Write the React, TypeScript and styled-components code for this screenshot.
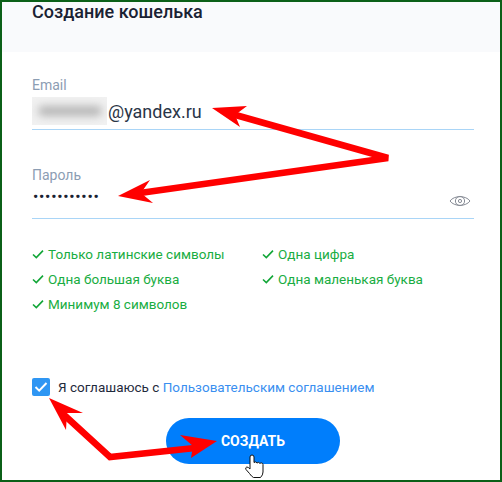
import React from 'react';
import styled, { createGlobalStyle } from 'styled-components';

const GlobalStyle = createGlobalStyle`
  html, body {
    margin: 0;
    padding: 0;
    background: #fff;
  }
  body {
    font-family: Roboto, "Liberation Sans", sans-serif;
  }
`;

const Frame = styled.div`
  position: relative;
  box-sizing: border-box;
  width: 502px;
  height: 482px;
  border: 2px solid #0b6018;
  background: #fff;
  overflow: hidden;
`;

const Header = styled.div`
  height: 50px;
  padding-left: 30px;
  background: #f9fafc;
`;

const Title = styled.div`
  font-size: 18px;
  font-weight: 500;
  line-height: 20px;
  color: #1a2233;
`;

const Form = styled.div`
  display: flex;
  flex-direction: column;
  padding: 25px 26px 0 30px;
`;

const Field = styled.div<{ $gap: number }>`
  margin-bottom: ${props => props.$gap}px;
  border-bottom: 1px solid #a9d5f7;
`;

const Label = styled.div`
  font-size: 14px;
  line-height: 16px;
  color: #8c9db3;
`;

const ValueRow = styled.div<{ $height: number }>`
  display: flex;
  align-items: center;
  justify-content: space-between;
  height: ${props => props.$height}px;
`;

const EmailValue = styled.div`
  display: flex;
  align-items: center;
  font-size: 18px;
  color: #2a3547;
`;

const BlurPatch = styled.div`
  position: relative;
  width: 75px;
  height: 28px;
  margin-right: 1px;
  background: #f1f1f1;
  overflow: hidden;

  &::before {
    content: '';
    position: absolute;
    left: 6px;
    right: 5px;
    top: 9px;
    height: 10px;
    border-radius: 5px;
    background: #b4b4b4;
    filter: blur(4px);
  }
`;

const Dots = styled.div`
  margin: 0 0 8px 1px;
  font-size: 15px;
  font-weight: 500;
  letter-spacing: 0.8px;
  color: #1a2233;
`;

const EyeSlot = styled.div`
  display: flex;
  margin-right: 3px;
`;

const Rules = styled.div`
  display: grid;
  grid-template-columns: 230px 1fr;
  grid-auto-rows: 25px;
  margin-top: -14px;
`;

const Rule = styled.div`
  display: flex;
  align-items: center;
  gap: 4px;
  font-size: 13.5px;
  color: #19ad42;
`;

const Agreement = styled.div`
  display: flex;
  align-items: center;
  gap: 8px;
  margin-top: 62px;
  font-size: 13.5px;
  color: #1f2a3c;
`;

const CheckBox = styled.div`
  display: flex;
  align-items: center;
  justify-content: center;
  width: 18px;
  height: 18px;
  border-radius: 2px;
  background: #2f96f3;
`;

const AgreementLink = styled.a`
  color: #3a8ff0;
`;

const CreateButton = styled.button`
  align-self: center;
  width: 174px;
  height: 46px;
  margin-top: 22px;
  border: none;
  border-radius: 23px;
  background: #007efc;
  color: #fff;
  font-family: inherit;
  font-size: 14px;
  font-weight: 700;
`;

const Overlay = styled.svg`
  position: absolute;
  left: -2px;
  top: -2px;
  width: 502px;
  height: 482px;
  pointer-events: none;
`;

const RuleCheck = () => (
  <svg width="12" height="12" viewBox="0 0 12 12" fill="none">
    <path d="M1 6.5 L4.3 9.6 L11 2.6" stroke="#12a638" strokeWidth="1.6" />
  </svg>
);

const EyeIcon = () => (
  <svg width="22" height="14" viewBox="0 0 22 14" fill="none" stroke="#878c96" strokeWidth="1">
    <path d="M1 7 C5 1.2 17 1.2 21 7 C17 12.8 5 12.8 1 7 Z" />
    <circle cx="11" cy="7" r="4.6" />
    <circle cx="11" cy="7" r="1.6" />
  </svg>
);

const leftRules = ['Только латинские символы', 'Одна большая буква', 'Минимум 8 символов'];
const rightRules = ['Одна цифра', 'Одна маленькая буква'];

const App: React.FC = () => {
  const rules = [leftRules[0], rightRules[0], leftRules[1], rightRules[1], leftRules[2]];

  return (
    <Frame>
      <GlobalStyle />
      <Header>
        <Title>Создание кошелька</Title>
      </Header>
      <Form>
        <Field $gap={37}>
          <Label>Email</Label>
          <ValueRow $height={36}>
            <EmailValue>
              <BlurPatch />
              @yandex.ru
            </EmailValue>
          </ValueRow>
        </Field>
        <Field $gap={36}>
          <Label>Пароль</Label>
          <ValueRow $height={35}>
            <Dots>•••••••••••</Dots>
            <EyeSlot>
              <EyeIcon />
            </EyeSlot>
          </ValueRow>
        </Field>
        <Rules>
          {rules.map(rule => (
            <Rule key={rule}>
              <RuleCheck />
              {rule}
            </Rule>
          ))}
        </Rules>
        <Agreement>
          <CheckBox>
            <svg width="14" height="12" viewBox="0 0 14 12" fill="none">
              <path d="M1.5 6 L5.2 9.6 L12.5 2" stroke="#fff" strokeWidth="2" />
            </svg>
          </CheckBox>
          <span>
            Я соглашаюсь с <AgreementLink>Пользовательским соглашением</AgreementLink>
          </span>
        </Agreement>
        <CreateButton>СОЗДАТЬ</CreateButton>
      </Form>
      <Overlay viewBox="0 0 502 482">
        <g fill="#ff0000">
          <polyline
            points="232,114 388,158 140,193"
            fill="none"
            stroke="#ff0000"
            strokeWidth="6.5"
            strokeLinejoin="bevel"
          />
          <polygon points="212,108 247,106 235,115 240,127" />
          <polygon points="118,196 150,180 141,193 153,203" />
          <polyline
            points="62,413 110,457 195,448"
            fill="none"
            stroke="#ff0000"
            strokeWidth="6.5"
            strokeLinejoin="miter"
          />
          <polygon points="49,398 83,413 67,413 66,430" />
          <polygon points="217,441 180,435 193,446 191,458" />
        </g>
        <path
          d="M250 457 a2 2 0 0 1 4 0 v5.5 a2 2 0 0 1 3 .5 a2 2 0 0 1 3 .5 a1.7 1.7 0 0 1 3 1 V472 q0 3 -2.5 5.5 h-7 q-2 -1 -4 -4 l-3.5 -4 q-1 -2 .8 -2.5 q1.5 0 3.2 2 z"
          fill="#fff"
          stroke="#111"
          strokeWidth="1"
        />
      </Overlay>
    </Frame>
  );
};

export default App;
